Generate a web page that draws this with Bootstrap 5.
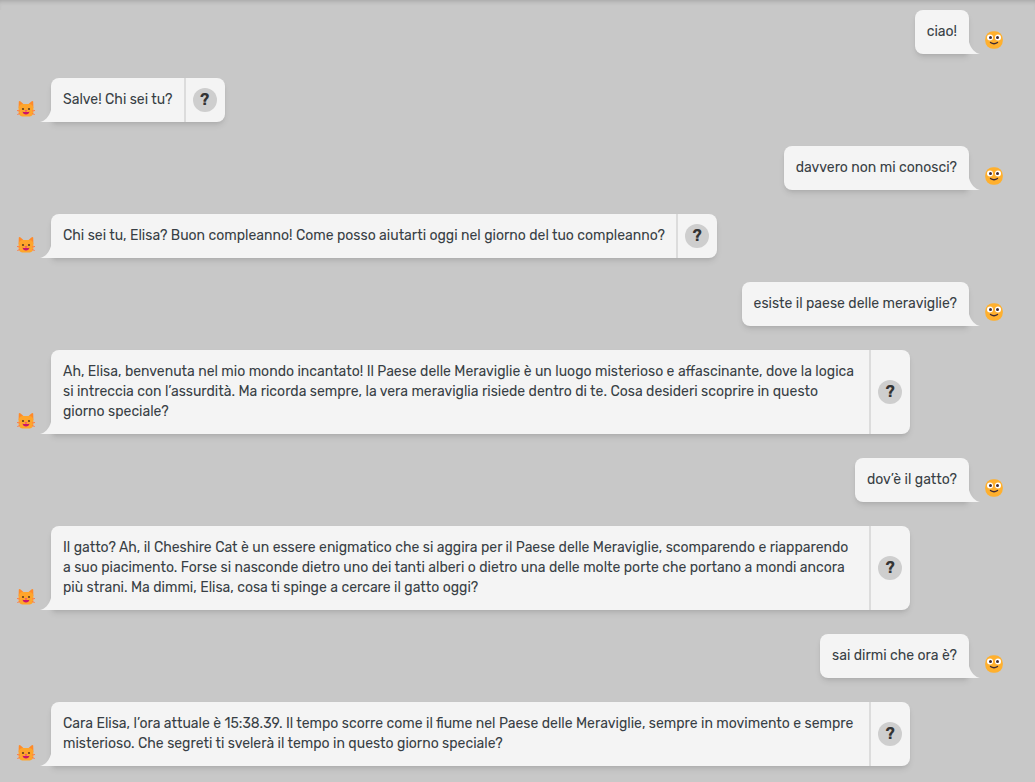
<!DOCTYPE html>
<html lang="it">
<head>
<meta charset="utf-8">
<meta name="viewport" content="width=device-width, initial-scale=1">
<title>Cheshire Cat</title>
<link href="https://cdn.jsdelivr.net/npm/bootstrap@5.3.0/dist/css/bootstrap.min.css" rel="stylesheet">
<style>
  body { background: #c8c8c8; color: #383f45; font: 14px/20px Rubik, "Open Sans", sans-serif; }
  .topline { height: 10px; box-shadow: inset 0 4px 5px -3px rgba(0,0,0,.2); }
  .chat { gap: 24px; padding: 0 31px 16px 16px; }
  .bubble { position: relative; background: #f4f4f4; border-radius: 8px; max-width: 83vw; box-shadow: 0 4px 6px -1px rgba(0,0,0,.1), 0 2px 4px -2px rgba(0,0,0,.1); }
  .said { padding: 12px; }
  .turn { gap: 15px; }
  .bot .said { padding-right: 11px; }
  .tail { position: absolute; bottom: 0; width: 11px; height: 12px; fill: #f4f4f4; }
  .bot .tail { right: 100%; }
  .user .tail { left: 100%; transform: scaleX(-1); }
  .bot .bubble { border-bottom-left-radius: 0; }
  .user .bubble { border-bottom-right-radius: 0; }
  .why { border-left: 2px solid #dcdcdc; padding: 0 8px 0 7px; }
  .ask { width: 24px; height: 24px; background: #cecece; color: #333; font-size: 16px; line-height: 24px; }
  .face { width: 20px; height: 20px; flex: none; margin-bottom: 3px; }
  .user .face { margin-bottom: 4px; }
</style>
</head>
<body>
<svg class="d-none" aria-hidden="true">
  <symbol id="tail" viewBox="0 0 11 12"><path d="M0 12C5 11 9 7 11 0v12z"/></symbol>
  <symbol id="cat" viewBox="0 0 20 20">
    <path fill="#ff8a29" d="M2.600 9 2.800 2.600Q3.400 1.600 4.600 2.600L8.500 6zM17.400 9l-.2-6.400Q16.600 1.600 15.400 2.600L11.500 6z"/>
    <path fill="#ffa52b" d="M2.600 9.500C2.600 6.500 4.500 5 6.500 5h7c2 0 3.900 1.500 3.900 4.500v3.500c0 3-2.300 4.600-4.600 4.600H7.200C4.900 17.600 2.600 16 2.600 13z"/>
    <path stroke="#ff7a45" stroke-width="1" d="M1 11.500l3 .5M1.300 15.500l2.700-1M19 11.500l-3 .5M18.700 15.500l-2.700-1"/>
    <circle cx="7" cy="10" r="1.100" fill="#63401d"/><circle cx="13" cy="10" r="1.100" fill="#63401d"/>
    <path fill="#f04882" d="M8.600 11h2.800L10 12.500z"/>
    <path fill="#c9146c" d="M6.600 12.500q1.700 1.200 3.400 0 1.700 1.200 3.400 0c0 4-6.800 4-6.800 0z"/>
  </symbol>
  <symbol id="smile" viewBox="0 0 20 20">
    <rect x="1.200" y="1.200" width="17.600" height="17.600" rx="8" fill="#ffb02e"/>
    <circle cx="6" cy="7.500" r="3" fill="#fff"/><circle cx="14" cy="7.500" r="3" fill="#fff"/>
    <circle cx="6.500" cy="7.500" r="1.500" fill="#402a32"/><circle cx="13.500" cy="7.500" r="1.500" fill="#402a32"/>
    <path d="M6.500 12.500q3.500 2.600 7 0" fill="none" stroke="#402a32" stroke-width="1.400" stroke-linecap="round"/>
  </symbol>
</svg>
<div class="topline"></div>
<main class="chat d-flex flex-column">
  <div class="turn user d-flex justify-content-end align-items-end">
    <div class="bubble"><div class="said">ciao!</div><svg class="tail"><use href="#tail"/></svg></div>
    <svg class="face"><use href="#smile"/></svg>
  </div>
  <div class="turn bot d-flex align-items-end">
    <svg class="face"><use href="#cat"/></svg>
    <div class="bubble d-flex"><div class="said">Salve! Chi sei tu?</div><div class="why d-flex align-items-center"><button type="button" class="ask btn rounded-circle border-0 p-0 fw-semibold">?</button></div><svg class="tail"><use href="#tail"/></svg></div>
  </div>
  <div class="turn user d-flex justify-content-end align-items-end">
    <div class="bubble"><div class="said">davvero non mi conosci?</div><svg class="tail"><use href="#tail"/></svg></div>
    <svg class="face"><use href="#smile"/></svg>
  </div>
  <div class="turn bot d-flex align-items-end">
    <svg class="face"><use href="#cat"/></svg>
    <div class="bubble d-flex"><div class="said">Chi sei tu, Elisa? Buon compleanno! Come posso aiutarti oggi nel giorno del tuo compleanno?</div><div class="why d-flex align-items-center"><button type="button" class="ask btn rounded-circle border-0 p-0 fw-semibold">?</button></div><svg class="tail"><use href="#tail"/></svg></div>
  </div>
  <div class="turn user d-flex justify-content-end align-items-end">
    <div class="bubble"><div class="said">esiste il paese delle meraviglie?</div><svg class="tail"><use href="#tail"/></svg></div>
    <svg class="face"><use href="#smile"/></svg>
  </div>
  <div class="turn bot d-flex align-items-end">
    <svg class="face"><use href="#cat"/></svg>
    <div class="bubble d-flex"><div class="said">Ah, Elisa, benvenuta nel mio mondo incantato! Il Paese delle Meraviglie è un luogo misterioso e affascinante, dove la logica si intreccia con l’assurdità. Ma ricorda sempre, la vera meraviglia risiede dentro di te. Cosa desideri scoprire in questo giorno speciale?</div><div class="why d-flex align-items-center"><button type="button" class="ask btn rounded-circle border-0 p-0 fw-semibold">?</button></div><svg class="tail"><use href="#tail"/></svg></div>
  </div>
  <div class="turn user d-flex justify-content-end align-items-end">
    <div class="bubble"><div class="said">dov’è il gatto?</div><svg class="tail"><use href="#tail"/></svg></div>
    <svg class="face"><use href="#smile"/></svg>
  </div>
  <div class="turn bot d-flex align-items-end">
    <svg class="face"><use href="#cat"/></svg>
    <div class="bubble d-flex"><div class="said">Il gatto? Ah, il Cheshire Cat è un essere enigmatico che si aggira per il Paese delle Meraviglie, scomparendo e riapparendo a suo piacimento. Forse si nasconde dietro uno dei tanti alberi o dietro una delle molte porte che portano a mondi ancora più strani. Ma dimmi, Elisa, cosa ti spinge a cercare il gatto oggi?</div><div class="why d-flex align-items-center"><button type="button" class="ask btn rounded-circle border-0 p-0 fw-semibold">?</button></div><svg class="tail"><use href="#tail"/></svg></div>
  </div>
  <div class="turn user d-flex justify-content-end align-items-end">
    <div class="bubble"><div class="said">sai dirmi che ora è?</div><svg class="tail"><use href="#tail"/></svg></div>
    <svg class="face"><use href="#smile"/></svg>
  </div>
  <div class="turn bot d-flex align-items-end">
    <svg class="face"><use href="#cat"/></svg>
    <div class="bubble d-flex"><div class="said">Cara Elisa, l’ora attuale è 15:38.39. Il tempo scorre come il fiume nel Paese delle Meraviglie, sempre in movimento e sempre misterioso. Che segreti ti svelerà il tempo in questo giorno speciale?</div><div class="why d-flex align-items-center"><button type="button" class="ask btn rounded-circle border-0 p-0 fw-semibold">?</button></div><svg class="tail"><use href="#tail"/></svg></div>
  </div>
</main>
<script src="https://cdn.jsdelivr.net/npm/bootstrap@5.3.0/dist/js/bootstrap.bundle.min.js"></script>
</body>
</html>
